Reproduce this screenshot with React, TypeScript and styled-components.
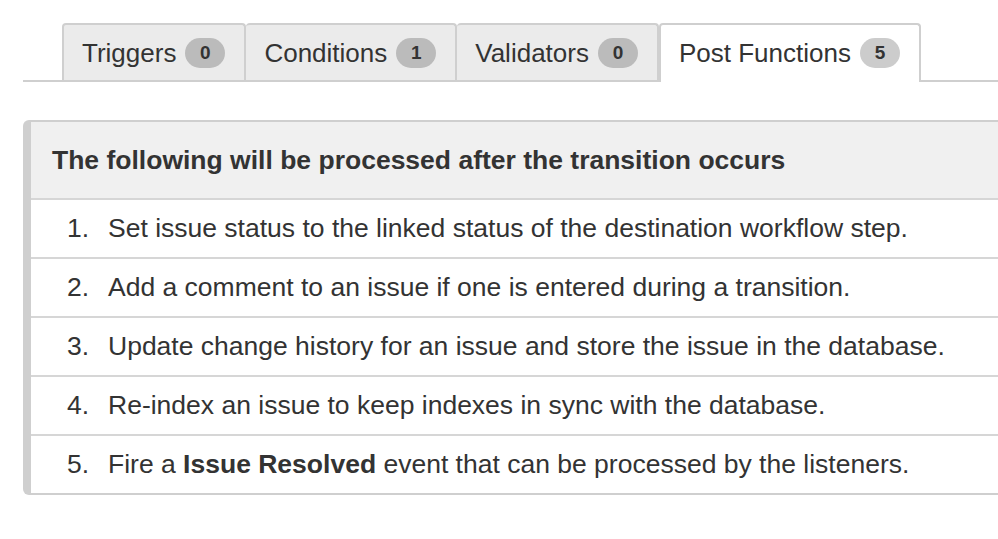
import React from "react";
import styled, { createGlobalStyle } from "styled-components";

const Global = createGlobalStyle`
  html, body { margin: 0; padding: 0; background: #fff; }
  body { font-family: "Liberation Sans", Arial, sans-serif; color: #333; }
`;

const Page = styled.div`
  padding: 23px 0 0 23px;
  overflow: hidden;
  width: 975px;
`;

const TabBar = styled.div`
  display: flex;
  align-items: flex-end;
  border-bottom: 2px solid #cfcfcf;
  padding-left: 39px;
  height: 57px;
`;

const Tab = styled.div<{ $active?: boolean; $first?: boolean }>`
  display: flex;
  align-items: center;
  gap: 9px;
  box-sizing: border-box;
  height: ${(p) => (p.$active ? "59px" : "57px")};
  margin-bottom: ${(p) => (p.$active ? "-2px" : "0")};
  padding: 1px 19px ${(p) => (p.$active ? "2px" : "0")} 18px;
  background: ${(p) => (p.$active ? "#fff" : "#ebebeb")};
  border: 2px solid #cfcfcf;
  border-bottom: 0;
  border-left-width: ${(p) => (p.$first || p.$active ? "2px" : "0")};
  border-radius: 4px 4px 0 0;
  font-size: 26px;
  color: #333;
`;

const Badge = styled.span<{ $light?: boolean }>`
  display: inline-flex;
  align-items: center;
  justify-content: center;
  width: 40px;
  height: 30px;
  border-radius: 15px;
  background: ${(p) => (p.$light ? "#cccccc" : "#bbbbbb")};
  color: #333;
  font-weight: bold;
  font-size: 19px;
`;

const Panel = styled.div`
  margin-top: 38px;
  border: 2px solid #cfcfcf;
  border-left: 8px solid #cfcfcf;
  border-right: none;
  border-radius: 6px 0 0 6px;
  overflow: hidden;
`;

const Header = styled.div`
  display: flex;
  align-items: center;
  height: 76px;
  padding-left: 21px;
  background: #f0f0f0;
  font-weight: bold;
  font-size: 26.5px;
  color: #333;
`;

const Row = styled.div`
  display: flex;
  align-items: center;
  height: 57px;
  border-top: 2px solid #d6d6d6;
  font-size: 26.5px;
  color: #333;
  white-space: nowrap;
`;

const Num = styled.span`
  width: 58px;
  text-align: right;
  margin-right: 19px;
  flex-shrink: 0;
`;

const items: React.ReactNode[] = [
  "Set issue status to the linked status of the destination workflow step.",
  "Add a comment to an issue if one is entered during a transition.",
  "Update change history for an issue and store the issue in the database.",
  "Re-index an issue to keep indexes in sync with the database.",
  <>
    Fire a <b>Issue Resolved</b> event that can be processed by the listeners.
  </>,
];

export default function App() {
  return (
    <>
      <Global />
      <Page>
        <TabBar>
          <Tab $first>
            Triggers <Badge>0</Badge>
          </Tab>
          <Tab>
            Conditions <Badge>1</Badge>
          </Tab>
          <Tab>
            Validators <Badge>0</Badge>
          </Tab>
          <Tab $active>
            Post Functions <Badge $light>5</Badge>
          </Tab>
        </TabBar>
        <Panel>
          <Header>The following will be processed after the transition occurs</Header>
          {items.map((it, i) => (
            <Row key={i}>
              <Num>{i + 1}.</Num>
              <span>{it}</span>
            </Row>
          ))}
        </Panel>
      </Page>
    </>
  );
}
